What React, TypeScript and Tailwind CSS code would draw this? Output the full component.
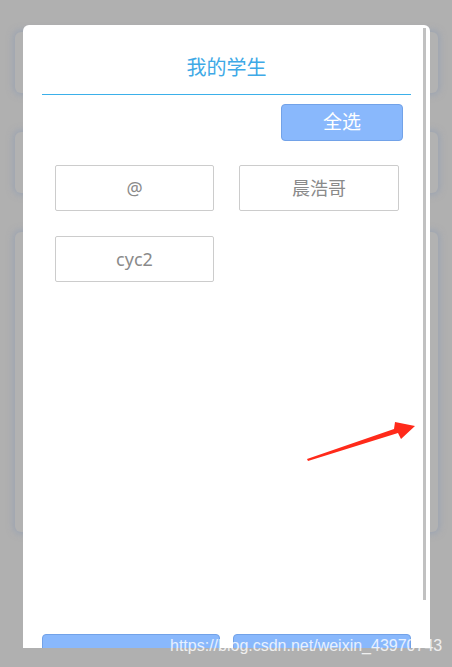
import React from "react";

const font = { fontFamily: '"Noto Sans", "Noto Sans CJK SC", sans-serif' };

function BgCard({ h }: { h: string }) {
  return (
    <div
      className={`w-full ${h} rounded-[6px] bg-[#b2b2b2] shadow-[0_0_6px_2px_rgba(140,155,180,0.55)]`}
    />
  );
}

function Student({ name }: { name: string }) {
  return (
    <div className="h-[46px] border border-[#cccccc] rounded-[2px] flex items-center justify-center text-[18px] text-[#8a8a8a] bg-white">
      {name}
    </div>
  );
}

export default function App() {
  return (
    <div className="relative w-[452px] h-[667px] overflow-hidden bg-[#b0b0b0]" style={font}>
      {/* background page */}
      <div className="px-[15px] pt-[32px]">
        <div className="w-[423px] flex flex-col gap-[39px]">
          <BgCard h="h-[61px]" />
          <BgCard h="h-[61px]" />
          <BgCard h="h-[300px]" />
        </div>
      </div>

      {/* modal */}
      <div className="absolute left-[23px] top-[25px] w-[407px] h-[623px] bg-white rounded-t-[6px] overflow-hidden flex flex-col">
        <div className="absolute right-[4px] top-[3px] w-[3px] h-[572px] bg-[#c1c1c1]" />
        <div className="pt-[30px] h-[56px] text-center text-[20px] leading-[26px] text-[#3ea9e6]">
          我的学生
        </div>
        <div className="mt-[13px] mx-[19px] h-px bg-[#3bb0ea]" />
        <div className="flex justify-end pr-[27px] mt-[9px]">
          <div className="w-[122px] h-[37px] rounded-[4px] bg-[#89b8fc] border border-[#72a2e8] flex items-center justify-center text-white text-[19px]">
            全选
          </div>
        </div>
        <div className="grid grid-cols-[159px_160px] gap-x-[25px] gap-y-[25px] pl-[32px] mt-[24px]">
          <Student name="@" />
          <Student name="晨浩哥" />
          <Student name="cyc2" />
        </div>
        <div className="mt-auto mb-[-26px] flex gap-[13px] px-[19px]">
          <div className="w-[178px] h-[40px] rounded-[4px] bg-[#89b8fc] border border-[#72a2e8]" />
          <div className="w-[178px] h-[40px] rounded-[4px] bg-[#89b8fc] border border-[#72a2e8]" />
        </div>
      </div>

      {/* red arrow annotation */}
      <svg className="absolute left-0 top-0" width="452" height="667" viewBox="0 0 452 667">
        <polygon
          points="307,459 394,429 395,422 415,426 401,439 398,433 308,461"
          fill="#ff2a1a"
        />
      </svg>

      {/* watermark */}
      <div
        className="absolute left-[170px] top-[636px] text-[16px] leading-[20px] text-white/80 whitespace-nowrap"
        style={{ fontFamily: '"Liberation Sans", Arial, sans-serif' }}
      >
        https://blog.csdn.net/weixin_43970743
      </div>
    </div>
  );
}
